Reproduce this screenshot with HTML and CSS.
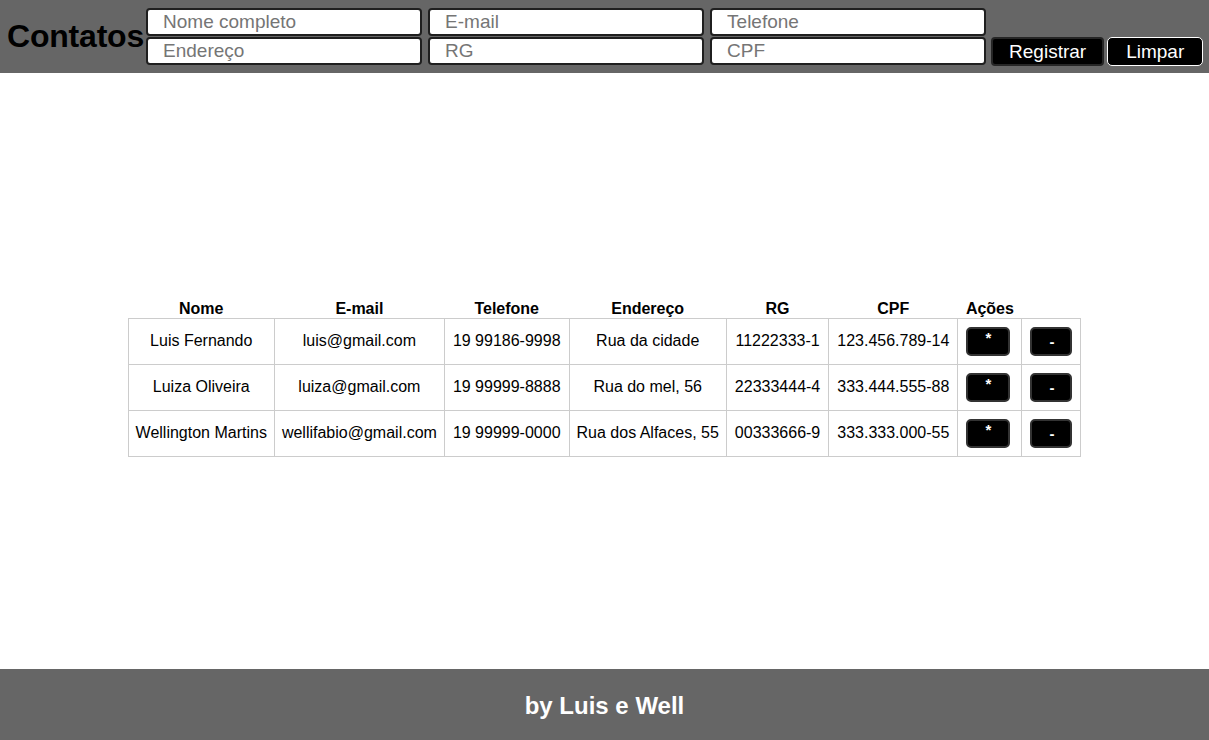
FILE: index.html
```html
<!DOCTYPE html>
<html lang="pt-BR">
<head>
<meta charset="utf-8">
<title>Contatos</title>
<link rel="stylesheet" href="styles.css">
</head>
<body>
<header class="topbar">
  <h1 class="title">Contatos</h1>
  <form class="form">
    <input class="field" type="text" placeholder="Nome completo">
    <input class="field" type="text" placeholder="E-mail">
    <input class="field" type="text" placeholder="Telefone">
    <div class="spacer"></div>
    <input class="field" type="text" placeholder="Endereço">
    <input class="field" type="text" placeholder="RG">
    <input class="field" type="text" placeholder="CPF">
    <div class="actions">
      <button type="button" class="btn btn-register">Registrar</button>
      <button type="button" class="btn btn-clear">Limpar</button>
    </div>
  </form>
</header>
<main class="content">
  <table class="contacts">
    <thead>
      <tr>
        <th>Nome</th><th>E-mail</th><th>Telefone</th><th>Endereço</th><th>RG</th><th>CPF</th><th>Ações</th>
      </tr>
    </thead>
    <tbody>
      <tr>
        <td>Luis Fernando</td><td>luis@gmail.com</td><td>19 99186-9998</td><td>Rua da cidade</td><td>11222333-1</td><td>123.456.789-14</td>
        <td><button class="act act-edit">*</button></td><td><button class="act act-del">-</button></td>
      </tr>
      <tr>
        <td>Luiza Oliveira</td><td>luiza@gmail.com</td><td>19 99999-8888</td><td>Rua do mel, 56</td><td>22333444-4</td><td>333.444.555-88</td>
        <td><button class="act act-edit">*</button></td><td><button class="act act-del">-</button></td>
      </tr>
      <tr>
        <td>Wellington Martins</td><td>wellifabio@gmail.com</td><td>19 99999-0000</td><td>Rua dos Alfaces, 55</td><td>00333666-9</td><td>333.333.000-55</td>
        <td><button class="act act-edit">*</button></td><td><button class="act act-del">-</button></td>
      </tr>
    </tbody>
  </table>
</main>
<footer class="footer">
  <h2 class="credit">by Luis e Well</h2>
</footer>
</body>
</html>
```

FILE: styles.css
```css
* { box-sizing: border-box; }

html, body {
  margin: 0;
  padding: 0;
}

body {
  font-family: "Liberation Sans", Arial, sans-serif;
  color: #000;
  background: #fff;
  min-height: 100vh;
  display: flex;
  flex-direction: column;
}

.topbar {
  background: #666666;
  height: 73px;
  display: flex;
  align-items: center;
  padding-left: 7px;
}

.title {
  margin: 0;
  font-size: 32px;
  font-weight: bold;
  line-height: 37px;
  letter-spacing: -0.2px;
}

.form {
  display: grid;
  grid-template-columns: 276px 276px 276px auto;
  grid-template-rows: 28px 28px;
  column-gap: 6px;
  row-gap: 1px;
  margin-top: -1px;
  margin-left: 2px;
}

.field {
  width: 100%;
  height: 28px;
  border: 2px solid #1f1f1f;
  border-radius: 4px;
  background: #fff;
  padding: 0 8px 0 15px;
  font-family: "Liberation Sans", Arial, sans-serif;
  font-size: 19px;
  color: #000;
  outline: none;
}

.field::placeholder {
  color: #757575;
}

.actions {
  display: flex;
  gap: 3px;
  margin-left: -1px;
}

.btn {
  height: 29px;
  background: #000;
  color: #fff;
  font-family: "Liberation Sans", Arial, sans-serif;
  font-size: 19px;
  border-radius: 4px;
  cursor: pointer;
  line-height: 1;
}

.btn-register {
  border: 2px solid #262626;
  padding: 0 16px;
}

.btn-clear {
  border: 1px solid #fff;
  border-radius: 5px;
  padding: 0 18px;
}

.content {
  flex: 1;
  display: flex;
  align-items: center;
  justify-content: center;
  padding-top: 14px;
}

.contacts {
  border-collapse: collapse;
  font-size: 16px;
}

.contacts th {
  font-weight: bold;
  padding: 0 8px;
  line-height: 18px;
  text-align: center;
}

.contacts td {
  border: 1px solid #cccccc;
  padding: 8px 8px;
  text-align: center;
  white-space: nowrap;
  line-height: 18px;
}

.contacts td:first-child,
.contacts td:nth-child(2),
.contacts td:nth-child(4) {
  padding-left: 7px;
  padding-right: 7px;
}

.act {
  display: block;
  height: 29px;
  background: #000;
  color: #fff;
  border: 2px solid #333;
  border-radius: 5px;
  font-family: "Liberation Sans", Arial, sans-serif;
  font-weight: bold;
  font-size: 15px;
  padding: 0 17px;
  cursor: pointer;
}

.act-edit {
  width: 44px;
  padding-bottom: 7px;
}

.act-del {
  width: 42px;
}

.footer {
  background: #666666;
  height: 71px;
  display: flex;
  align-items: center;
  justify-content: center;
  padding-top: 2px;
}

.credit {
  margin: 0;
  color: #fff;
  font-size: 24px;
  font-weight: bold;
}
```
